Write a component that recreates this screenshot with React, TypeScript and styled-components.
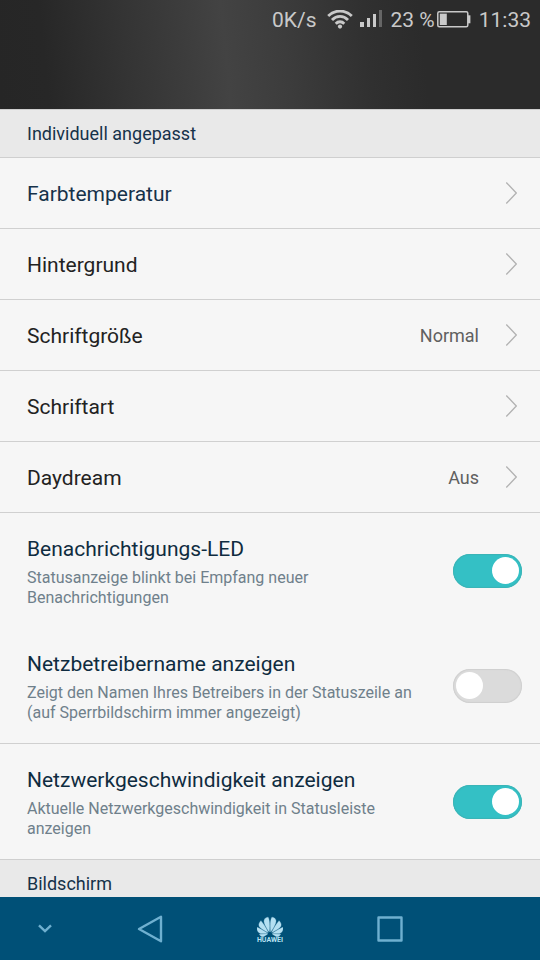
import React, { useId, useState } from "react";
import styled, { createGlobalStyle } from "styled-components";
import { SiHuawei } from "react-icons/si";

const GlobalStyle = createGlobalStyle`
  *, *::before, *::after { box-sizing: border-box; }
  body { margin: 0; background: #f6f6f6; }
  body, button, input { font-family: Roboto, "Noto Sans", sans-serif; }
`;

const Screen = styled.div`
  display: flex;
  flex-direction: column;
  height: 100vh;
  overflow: hidden;
`;

const Header = styled.header`
  flex: none;
  height: 109px;
  background: linear-gradient(84deg, #262626 0%, #272727 9%, #343434 24%, #3c3c3c 34%, #434343 42%, #3c3c3c 53%, #303030 68%, #2b2b2b 78%, #2b2b2b 100%);
`;

const StatusBar = styled.div`
  display: flex;
  align-items: center;
  justify-content: flex-end;
  height: 40px;
  padding-right: 9px;
  color: #c9c9c9;
  font-size: 21px;
  line-height: 24px;
  white-space: nowrap;

  svg { display: block; flex: none; }
`;

const StatusIcons = styled.span`
  display: flex;
  gap: 7px;
  margin: 0 9px 0 10px;
`;

const BatterySlot = styled.span`
  margin: 0 8px 0 2px;
`;

const Content = styled.main`
  flex: 1;
  min-height: 0;
  overflow: hidden;
  background: #f6f6f6;
`;

const SectionTitle = styled.h2`
  display: flex;
  align-items: center;
  height: 49px;
  margin: 0;
  padding: 0 27px;
  border-top: 1px solid #cfcfcf;
  border-bottom: 1px solid #cfcfcf;
  background: #e9e9e9;
  color: #16324a;
  font-size: 18px;
  font-weight: 400;
  line-height: 22px;
`;

const LinkRow = styled.button<{ $accent?: boolean }>`
  display: flex;
  align-items: center;
  width: 100%;
  height: 71px;
  padding: 0 23px 0 27px;
  border: 0;
  border-bottom: 1px solid #d0d0d0;
  background: none;
  color: ${(p) => (p.$accent ? "#16324a" : "#222222")};
  font-size: 21px;
  line-height: 26px;
  text-align: left;
`;

const RowName = styled.span`
  flex: 1;
  padding-top: 2px;
`;

const RowValue = styled.span`
  margin-right: 27px;
  padding-top: 2px;
  color: #606060;
  font-size: 18px;
`;

const SwitchRow = styled.div<{ $line?: boolean }>`
  display: flex;
  align-items: center;
  justify-content: space-between;
  padding: 20px 18px 20px 27px;
  border-bottom: ${(p) => (p.$line ? "1px solid #d0d0d0" : "0")};
`;

const SwitchLabel = styled.label`
  display: block;
  color: #0f2c40;
  font-size: 21px;
  line-height: 32px;
`;

const Description = styled.p`
  max-width: 400px;
  margin: 3px 0 0;
  color: #6f808b;
  font-size: 16px;
  line-height: 20px;
`;

const Switch = styled.input`
  appearance: none;
  display: flex;
  flex: none;
  align-items: center;
  justify-content: flex-start;
  width: 69px;
  height: 34px;
  margin: 0;
  padding: 0 3px;
  border-radius: 17px;
  background: #dbdbdb;
  box-shadow: inset 0 0 1px 1px #cfcfcf;

  &::before {
    content: "";
    width: 27px;
    height: 27px;
    border-radius: 50%;
    background: #ffffff;
  }

  &:checked {
    justify-content: flex-end;
    background: #34c0c5;
    box-shadow: inset 0 0 1px 1px #3bb3b5;
  }
`;

const NavBar = styled.nav`
  display: grid;
  flex: none;
  grid-template-columns: 3fr 4fr 4fr 4fr 3fr;
  height: 63px;
  background: #005077;
`;

const NavButton = styled.button`
  display: flex;
  flex-direction: column;
  align-items: center;
  justify-content: center;
  padding: 0;
  border: 0;
  background: none;
  color: #6fb0d0;

  svg { display: block; }
`;

const HomeButton = styled(NavButton)`
  color: #b5e0f2;
`;

const Brand = styled.span`
  margin-top: -3px;
  font-size: 7px;
  font-weight: 700;
  line-height: 6px;
`;

const WifiIcon = () => (
  <svg width="26" height="20" viewBox="0 0 26 20" fill="none" stroke="currentColor" strokeWidth="2.8" aria-hidden="true">
    <path d="M1.2 6C7.8 -.6 18.2 -.6 24.8 6" />
    <path d="M5 10C9.6 5.2 16.4 5.2 21 10" />
    <path d="M8.7 13.7C11.2 11.1 14.8 11.1 17.3 13.7" />
    <circle cx="13" cy="16.6" r="2.1" fill="currentColor" stroke="none" />
  </svg>
);

const SignalIcon = () => (
  <svg width="22" height="20" viewBox="0 0 22 20" fill="currentColor" aria-hidden="true">
    <rect x="0" y="12" width="4" height="5" />
    <rect x="7" y="8" width="3" height="9" />
    <rect x="13" y="4" width="3" height="13" />
    <rect x="19" y="0" width="3" height="17" fill="#666666" />
  </svg>
);

const BatteryIcon = () => (
  <svg width="34" height="18" viewBox="0 0 34 18" fill="none" aria-hidden="true">
    <rect x=".8" y=".8" width="30" height="15" rx="1.5" stroke="currentColor" strokeWidth="1.5" />
    <rect x="2.8" y="2.6" width="7" height="11.4" fill="currentColor" />
    <path d="M31 4.3H33.4V12.3H31" fill="currentColor" />
  </svg>
);

const RowArrow = () => (
  <svg width="11" height="22" viewBox="0 0 11 22" fill="none" stroke="#b2b2b2" strokeWidth="1.3" aria-hidden="true">
    <path d="M.3 .5L10.3 11L.3 21.5" />
  </svg>
);

const links = [
  { name: "Farbtemperatur", accent: true },
  { name: "Hintergrund" },
  { name: "Schriftgröße", value: "Normal" },
  { name: "Schriftart" },
  { name: "Daydream", value: "Aus" },
];

type SettingProps = { name: string; text: string; on: boolean; line?: boolean };

const switches: SettingProps[] = [
  { name: "Benachrichtigungs-LED", text: "Statusanzeige blinkt bei Empfang neuer Benachrichtigungen", on: true },
  {
    name: "Netzbetreibername anzeigen",
    text: "Zeigt den Namen Ihres Betreibers in der Statuszeile an (auf Sperrbildschirm immer angezeigt)",
    on: false,
    line: true,
  },
  { name: "Netzwerkgeschwindigkeit anzeigen", text: "Aktuelle Netzwerkgeschwindigkeit in Statusleiste anzeigen", on: true },
];

function SwitchSetting({ name, text, on, line }: SettingProps) {
  const id = useId();
  const [checked, setChecked] = useState(on);
  return (
    <SwitchRow $line={line}>
      <div>
        <SwitchLabel htmlFor={id}>{name}</SwitchLabel>
        <Description id={`${id}-text`}>{text}</Description>
      </div>
      <Switch
        id={id}
        type="checkbox"
        role="switch"
        aria-describedby={`${id}-text`}
        checked={checked}
        onChange={(e) => setChecked(e.target.checked)}
      />
    </SwitchRow>
  );
}

export default function App() {
  return (
    <Screen>
      <GlobalStyle />
      <Header>
        <StatusBar>
          <span>0K/s</span>
          <StatusIcons>
            <WifiIcon />
            <SignalIcon />
          </StatusIcons>
          <span>23 %</span>
          <BatterySlot>
            <BatteryIcon />
          </BatterySlot>
          <span>11:33</span>
        </StatusBar>
      </Header>
      <Content>
        <SectionTitle>Individuell angepasst</SectionTitle>
        {links.map((item) => (
          <LinkRow key={item.name} type="button" $accent={item.accent}>
            <RowName>{item.name}</RowName>
            {item.value && <RowValue>{item.value}</RowValue>}
            <RowArrow />
          </LinkRow>
        ))}
        {switches.map((item) => (
          <SwitchSetting key={item.name} {...item} />
        ))}
        <SectionTitle>Bildschirm</SectionTitle>
      </Content>
      <NavBar>
        <NavButton type="button" aria-label="Leiste ausblenden">
          <svg width="14" height="9" viewBox="0 0 14 9" fill="none" stroke="currentColor" strokeWidth="2.4" aria-hidden="true">
            <path d="M1 1.3L7 7L13 1.3" />
          </svg>
        </NavButton>
        <NavButton type="button" aria-label="Zurück">
          <svg width="26" height="28" viewBox="0 0 26 28" fill="none" stroke="currentColor" strokeWidth="2.4" strokeLinejoin="round" aria-hidden="true">
            <path d="M24 1.8V26.2L2 14Z" />
          </svg>
        </NavButton>
        <HomeButton type="button" aria-label="Startbildschirm">
          <SiHuawei size={26} stroke="currentColor" strokeWidth={0.3} aria-hidden="true" />
          <Brand>HUAWEI</Brand>
        </HomeButton>
        <NavButton type="button" aria-label="Letzte Apps">
          <svg width="26" height="26" viewBox="0 0 26 26" fill="none" stroke="currentColor" strokeWidth="2.4" strokeLinejoin="round" aria-hidden="true">
            <rect x="1.5" y="1.5" width="23" height="23" />
          </svg>
        </NavButton>
      </NavBar>
    </Screen>
  );
}
